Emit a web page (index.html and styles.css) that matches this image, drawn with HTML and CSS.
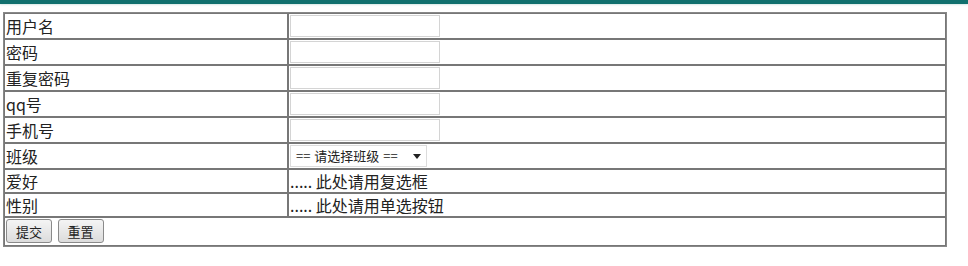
FILE: index.html
```html
<!DOCTYPE html>
<html lang="zh-CN">
<head>
    <meta charset="UTF-8">
    <title>注册</title>
    <link rel="stylesheet" href="styles.css">
</head>
<body>

<div class="top-bar"></div>

<form class="reg-form">
    <table class="reg-table">
        <tr>
            <td class="label">用户名</td>
            <td><input type="text" class="field"></td>
        </tr>
        <tr>
            <td class="label">密码</td>
            <td><input type="password" class="field"></td>
        </tr>
        <tr>
            <td class="label">重复密码</td>
            <td><input type="password" class="field"></td>
        </tr>
        <tr>
            <td class="label">qq号</td>
            <td><input type="text" class="field"></td>
        </tr>
        <tr>
            <td class="label">手机号</td>
            <td><input type="text" class="field"></td>
        </tr>
        <tr>
            <td class="label">班级</td>
            <td>
                <div class="select-box">
                    <span>== 请选择班级 ==</span>
                    <span class="arrow"></span>
                </div>
            </td>
        </tr>
        <tr>
            <td class="label">爱好</td>
            <td>..... 此处请用复选框</td>
        </tr>
        <tr>
            <td class="label">性别</td>
            <td>..... 此处请用单选按钮</td>
        </tr>
        <tr>
            <td colspan="2" class="actions">
                <button type="button">提交</button>
                <button type="button">重置</button>
            </td>
        </tr>
    </table>
</form>

</body>
</html>
```

FILE: styles.css
```css
body {
    margin: 0;
    font-family: "Noto Sans CJK SC", "Liberation Sans", sans-serif;
    font-size: 16px;
    color: #222;
    background-color: white;
}

.top-bar {
    height: 4px;
    background-color: #11706e;
    box-shadow: 0 1px 2px #d8e8e6;
}

.reg-form {
    padding: 8px 21px 0 3px;
}

.reg-table {
    width: 100%;
    border: 1px solid #888;
    border-collapse: separate;
    border-spacing: 0;
}

.reg-table td {
    border: 1px solid #777;
    height: 22px;
    padding: 0 1px;
    line-height: 20px;
}

.reg-table td.label {
    width: 280px;
}

.field {
    display: block;
    width: 150px;
    height: 22px;
    box-sizing: border-box;
    border: 1px solid #d4d4d4;
    margin: 1px 0;
    padding: 0;
}

.select-box {
    width: 137px;
    height: 22px;
    box-sizing: border-box;
    border: 1px solid #dcdcdc;
    margin: 1px 0;
    display: flex;
    align-items: center;
    justify-content: space-between;
    padding: 0 5px 0 5px;
    font-size: 13px;
    word-spacing: 1px;
}

.arrow {
    width: 0;
    height: 0;
    border-left: 4px solid transparent;
    border-right: 4px solid transparent;
    border-top: 5px solid #222;
}

.actions {
    height: 28px;
}

.reg-table td.actions {
    padding: 1px 1px 2px 1px;
}

.actions button {
    font-family: inherit;
    font-size: 13px;
    padding: 0 9px;
    height: 24px;
    margin: 0 2px 0 0;
    border: 1px solid #8a8a8a;
    border-radius: 3px;
    background: linear-gradient(#f4f4f4, #dcdcdc);
    color: #222;
}
```
